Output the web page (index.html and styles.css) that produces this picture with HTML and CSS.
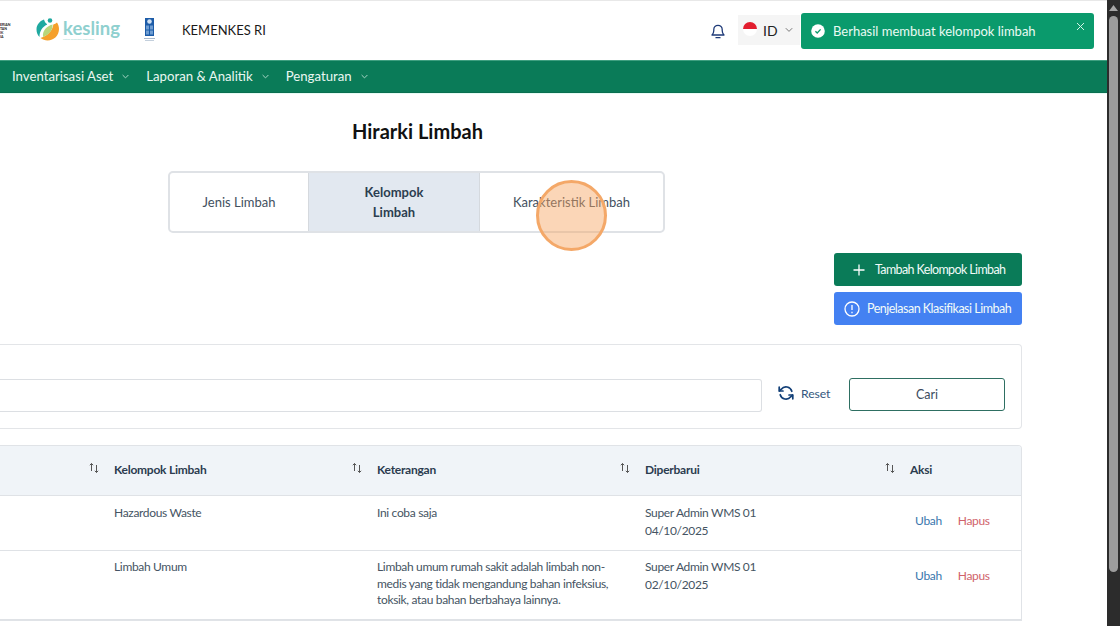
FILE: index.html
```html
<!DOCTYPE html>
<html lang="id">
<head>
<meta charset="utf-8">
<title>Hirarki Limbah</title>
<link rel="stylesheet" href="styles.css">
</head>
<body>
<div class="page">
  <header class="topbar">
    <div class="brand">
      <div class="ministry"><span>ERIAN</span><span>TAN</span><span>IK</span><span>IA</span></div>
      <div class="kesling">
        <svg class="kesling-mark" width="24" height="24" viewBox="0 0 24 24">
          <path d="M8 2.500C3.500 4 .5 8 .5 12.500c0 3 1.200 5.500 3 7.500 0-6 3-10.500 8-12.500C9.800 6.500 8.500 4.700 8 2.500z" fill="#1fa9a0"/>
          <path d="M4.500 21c2 1.600 4.500 2.500 7 2.500 6.500 0 11.500-5 11.500-11.500 0-2.500-.8-4.800-2-6.500-1 1-2.300 1.700-3.700 2-.6 6-5.500 11-12.800 13.500z" fill="#f5a02c"/>
          <path d="M7 20c-.8-6 3-10.500 9.500-12.500.5 5.500-3.500 10.500-9.500 12.500z" fill="#b9d67a"/>
          <circle cx="14" cy="3.500" r="2.300" fill="#1fa9a0"/>
          <path d="M11 7.500c2.500.5 5-.5 6.500-3" stroke="#fff" stroke-width="1.200" fill="none"/>
        </svg>
        <div class="kesling-word">kesling<span class="kesling-sub">sistem kesehatan lingkungan</span></div>
      </div>
      <svg class="undp" width="11" height="24" viewBox="0 0 11 24">
        <rect x="1" y="0" width="9" height="18" fill="#1d5ca8"/>
        <circle cx="5.500" cy="3.500" r="2.300" fill="#cfe0f2"/>
        <rect x="2" y="7.500" width="3" height="4" fill="#6f9dd2"/>
        <rect x="6" y="7.500" width="3" height="4" fill="#6f9dd2"/>
        <rect x="2" y="12.500" width="3" height="4" fill="#6f9dd2"/>
        <rect x="6" y="12.500" width="3" height="4" fill="#6f9dd2"/>
        <rect x="0" y="20" width="11" height="1" fill="#a9b9cc"/>
        <rect x="1" y="22" width="9" height="1" fill="#c3cfdc"/>
      </svg>
      <div class="org">KEMENKES RI</div>
    </div>
    <div class="top-actions">
      <svg class="bell" width="16" height="16" viewBox="0 0 16 16" fill="none" stroke="#1e3a78" stroke-width="1.300" stroke-linecap="round" stroke-linejoin="round">
        <path d="M2 12h12c-1.200-1.200-1.800-2.200-1.800-4.500V6.500a4.200 4.200 0 0 0-8.400 0v1C3.800 9.800 3.200 10.800 2 12z"/>
        <path d="M6 14.700h4"/>
      </svg>
      <div class="lang">
        <span class="flag"></span>
        <span class="lang-code">ID</span>
        <svg width="8" height="6" viewBox="0 0 8 6" fill="none" stroke="#777" stroke-width="1"><path d="M.8 1.200 4 4.400l3.200-3.200"/></svg>
      </div>
    </div>
  </header>
  <nav class="navbar">
    <span class="nav-item">Inventarisasi Aset <svg width="7" height="5" viewBox="0 0 7 5" fill="none" stroke="#a9d6c6" stroke-width="1"><path d="M.6 1 3.500 3.900 6.400 1"/></svg></span>
    <span class="nav-item">Laporan &amp; Analitik <svg width="7" height="5" viewBox="0 0 7 5" fill="none" stroke="#a9d6c6" stroke-width="1"><path d="M.6 1 3.500 3.900 6.400 1"/></svg></span>
    <span class="nav-item">Pengaturan <svg width="7" height="5" viewBox="0 0 7 5" fill="none" stroke="#a9d6c6" stroke-width="1"><path d="M.6 1 3.500 3.900 6.400 1"/></svg></span>
  </nav>
  <main class="content">
    <h1 class="title">Hirarki Limbah</h1>
    <div class="tabs">
      <div class="tab tab-a">Jenis Limbah</div>
      <div class="tab tab-b tab-active">Kelompok<br>Limbah</div>
      <div class="tab tab-c">Karakteristik Limbah</div>
    </div>
    <div class="actions">
      <button class="btn btn-green">
        <svg width="14" height="14" viewBox="0 0 14 14" stroke="#fff" stroke-width="1.300"><path d="M7 1.500v11M1.500 7h11"/></svg>
        Tambah Kelompok Limbah
      </button>
      <button class="btn btn-blue">
        <svg width="16" height="16" viewBox="0 0 16 16" fill="none" stroke="#fff" stroke-width="1.300"><circle cx="8" cy="8" r="7"/><path d="M8 4v5M8 10.800v1.400"/></svg>
        Penjelasan Klasifikasi Limbah
      </button>
    </div>
    <section class="filter">
      <div class="search"></div>
      <span class="reset">
        <svg width="16" height="16" viewBox="0 0 16 16" fill="none" stroke="#123f77" stroke-width="1.700" stroke-linecap="round" stroke-linejoin="round">
          <path d="M13.800 6.300A6 6 0 0 0 3.300 4.200L1.500 6"/><path d="M1.200 2.200V6h3.800"/>
          <path d="M2.200 9.700a6 6 0 0 0 10.500 2.100L14.500 10"/><path d="M14.800 13.800V10H11"/>
        </svg>
        Reset
      </span>
      <button class="btn-search">Cari</button>
    </section>
    <section class="table">
      <div class="row row-head">
        <div class="cell col-a"><svg class="sort" width="12" height="12" viewBox="0 0 12 12" fill="none" stroke="#555" stroke-width="1"><path d="M3.500 9V1.500M1.800 3.200l1.700-1.700 1.700 1.700M8.500 3v7.500M6.800 8.800l1.700 1.700 1.700-1.700"/></svg></div>
        <div class="cell col-b">Kelompok Limbah<svg class="sort" width="12" height="12" viewBox="0 0 12 12" fill="none" stroke="#555" stroke-width="1"><path d="M3.500 9V1.500M1.800 3.200l1.700-1.700 1.700 1.700M8.500 3v7.500M6.800 8.800l1.700 1.700 1.700-1.700"/></svg></div>
        <div class="cell col-c">Keterangan<svg class="sort" width="12" height="12" viewBox="0 0 12 12" fill="none" stroke="#555" stroke-width="1"><path d="M3.500 9V1.500M1.800 3.200l1.700-1.700 1.700 1.700M8.500 3v7.500M6.800 8.800l1.700 1.700 1.700-1.700"/></svg></div>
        <div class="cell col-d">Diperbarui<svg class="sort" width="12" height="12" viewBox="0 0 12 12" fill="none" stroke="#555" stroke-width="1"><path d="M3.500 9V1.500M1.800 3.200l1.700-1.700 1.700 1.700M8.500 3v7.500M6.800 8.800l1.700 1.700 1.700-1.700"/></svg></div>
        <div class="cell col-e">Aksi</div>
      </div>
      <div class="row row-one">
        <div class="cell col-a"></div>
        <div class="cell col-b">Hazardous Waste</div>
        <div class="cell col-c">Ini coba saja</div>
        <div class="cell col-d">Super Admin WMS 01<br>04/10/2025</div>
        <div class="cell col-e col-actions"><a class="edit">Ubah</a><a class="del">Hapus</a></div>
      </div>
      <div class="row row-two">
        <div class="cell col-a"></div>
        <div class="cell col-b">Limbah Umum</div>
        <div class="cell col-c">Limbah umum rumah sakit adalah limbah non-medis yang tidak mengandung bahan infeksius, toksik, atau bahan berbahaya lainnya.</div>
        <div class="cell col-d">Super Admin WMS 01<br>02/10/2025</div>
        <div class="cell col-e col-actions"><a class="edit">Ubah</a><a class="del">Hapus</a></div>
      </div>
    </section>
  </main>
</div>
<div class="scrollbar">
  <svg class="scroll-up" width="9" height="6" viewBox="0 0 9 6"><path d="M4.500 0 9 6H0z" fill="#a6a6a6"/></svg>
  <div class="scroll-thumb"></div>
</div>
<div class="toast">
  <svg width="14" height="14" viewBox="0 0 14 14"><circle cx="7" cy="7" r="6.800" fill="#fff"/><path d="M4.400 7.200 6.200 9l3.400-3.600" fill="none" stroke="#0a9a6c" stroke-width="1.300"/></svg>
  <span class="toast-text">Berhasil membuat kelompok limbah</span>
  <svg class="toast-close" width="9" height="9" viewBox="0 0 9 9" stroke="#d6f3e7" stroke-width="1"><path d="M1 1l7 7M8 1 1 8"/></svg>
</div>
<div class="cursor"></div>
</body>
</html>
```
FILE: styles.css
```css
* { box-sizing: border-box; }
html, body { margin: 0; height: 626px; overflow: hidden; }
body { background: #fff; font-family: Lato, "Liberation Sans", sans-serif; color: #334155; }
.page { width: 1107px; height: 626px; overflow: hidden; }

.topbar { height: 61px; display: flex; align-items: center; justify-content: space-between; border-top: 1px solid #e8e8e8; border-bottom: 1px solid #3f9f80; }
.brand { display: flex; align-items: center; }
.ministry { width: 36px; display: flex; flex-direction: column; font-size: 3.500px; line-height: 4px; font-weight: 700; color: #222; }
.kesling { display: flex; align-items: center; gap: 3px; width: 108px; margin-top: -3px; }
.kesling-mark { flex: none; }
.kesling-word { font-size: 18.500px; line-height: 20px; color: #8fd0cf; font-weight: 700; display: flex; flex-direction: column; }
.kesling-sub { font-size: 2.500px; line-height: 3px; font-weight: 400; color: #9fd6d4; white-space: nowrap; }
.undp { margin-top: -2px; }
.org { margin-left: 27px; font-size: 13px; color: #1a1a1a; margin-top: -1px; }
.top-actions { display: flex; align-items: center; margin-right: 307px; margin-top: -1px; }
.bell { margin-right: 12px; margin-top: 2px; }
.lang { width: 62px; height: 30px; background: #f5f5f5; display: flex; align-items: center; padding-left: 5px; }
.flag { width: 14px; height: 14px; border-radius: 50%; background: linear-gradient(#e21d2e 50%, #fff 50%); margin-top: -2px; }
.lang-code { font-size: 14px; color: #222; margin: 0 7px 0 6px; }

.navbar { height: 32px; background: #0a7b58; display: flex; align-items: center; padding: 0 0 1px 12px; gap: 17px; border-bottom: 1px solid #0a6f50; }
.nav-item { font-size: 13.200px; color: #e9f7f1; display: flex; align-items: center; gap: 6px; white-space: nowrap; }
.nav-item svg { margin-left: 3px; }

.content { position: relative; border-top: 1px solid #e6fbf4; }
.title { margin: 24px 0 0; height: 26px; padding-left: 352px; font-size: 20px; line-height: 26px; font-weight: 700; color: #111; white-space: nowrap; }
.tabs { display: flex; width: 497px; height: 62px; margin: 27px 0 0 168px; border: 2px solid #dfe2e6; border-radius: 5px; overflow: hidden; }
.tab { display: flex; align-items: center; justify-content: center; text-align: center; font-size: 13px; line-height: 20px; color: #42505e; }
.tab-a { width: 139px; border-right: 1px solid #d5d9de; }
.tab-b { width: 171px; border-right: 1px solid #d5d9de; }
.tab-c { flex: 1; }
.tab-active { background: #e2e8f0; font-weight: 700; color: #2c3e50; }
.actions { width: 1022px; margin-top: 20px; display: flex; flex-direction: column; align-items: flex-end; gap: 6px; }
.btn { width: 188px; height: 33px; border: 0; border-radius: 3px; display: flex; align-items: center; color: #f2fbf8; font: 400 12.500px Lato, "Liberation Sans", sans-serif; letter-spacing: -.5px; white-space: nowrap; }
.btn-green { background: #0a7b58; padding-left: 18px; gap: 9px; letter-spacing: -.62px; }
.btn-blue { background: #4481f2; padding-left: 10px; gap: 7px; }
.filter { width: 1022px; height: 85px; margin-top: 19px; border: 1px solid #e3e5e8; border-left: 0; border-radius: 0 4px 4px 0; display: flex; align-items: center; padding: 19px 16px 0 0; }
.search { width: 762px; height: 33px; border: 1px solid #dcdfe3; border-left: 0; border-radius: 0 3px 3px 0; margin-top: -2px; }
.reset { display: flex; align-items: center; gap: 7px; margin: -6px 0 0 16px; width: 71px; font-size: 12.200px; color: #34587e; letter-spacing: -.1px; }
.btn-search { width: 156px; height: 33px; background: #fff; border: 1px solid #2e6f62; border-radius: 3px; font: 400 12.500px Lato, "Liberation Sans", sans-serif; color: #3c4c5e; margin-top: -4px; }
.table { width: 1022px; margin-top: 16px; border: 1px solid #e0e3e7; border-left: 0; border-radius: 0 4px 0 0; overflow: hidden; }
.row { display: flex; border-bottom: 1px solid #dfe2e6; }
.row-head { height: 50px; background: #f0f4f8; align-items: center; }
.row-one { height: 55px; }
.row-two { height: 69px; }
.cell { font-size: 12px; line-height: 18px; padding: 8px 8px 0; color: #455463; letter-spacing: -.33px; }
.row-two .cell { padding-top: 7px; }
.row-two .col-c { line-height: 16.500px; padding-top: 8px; }
.row-head .cell { position: relative; height: 100%; display: flex; align-items: center; padding: 0 8px 2px; color: #2b3c4f; font-weight: 700; letter-spacing: -.25px; }
.col-a { width: 106px; }
.col-b { width: 263px; }
.col-c { width: 268px; padding-right: 20px; }
.col-d { width: 265px; }
.col-e { width: 119px; }
.row-head .col-c { padding-right: 20px; }
.sort { position: absolute; right: 6px; top: 16px; }
.row .col-actions { display: flex; align-items: flex-start; gap: 16px; padding: 16px 0 0 13px; }
.edit { color: #3a76ad; }
.del { color: #d0626b; }

.scrollbar { position: absolute; left: 1107px; top: 0; width: 13px; height: 626px; background: #2c2c2c; }
.scroll-up { position: absolute; left: 2px; top: 5px; }
.scroll-thumb { position: absolute; left: 2px; top: 16px; width: 9px; height: 556px; border-radius: 5px; background: #9c9c9c; }
.toast { position: absolute; left: 801px; top: 13px; width: 293px; height: 36px; background: #0a9a6c; border-radius: 3px; display: flex; align-items: center; padding-left: 10px; color: #eafaf4; }
.toast-text { margin-left: 8px; font-size: 13px; white-space: nowrap; }
.toast-close { position: absolute; right: 9px; top: 9px; }
.cursor { position: absolute; left: 536px; top: 180px; width: 71px; height: 71px; border-radius: 50%; background: rgba(246, 165, 95, .45); border: 3px solid #f4a868; }
```
